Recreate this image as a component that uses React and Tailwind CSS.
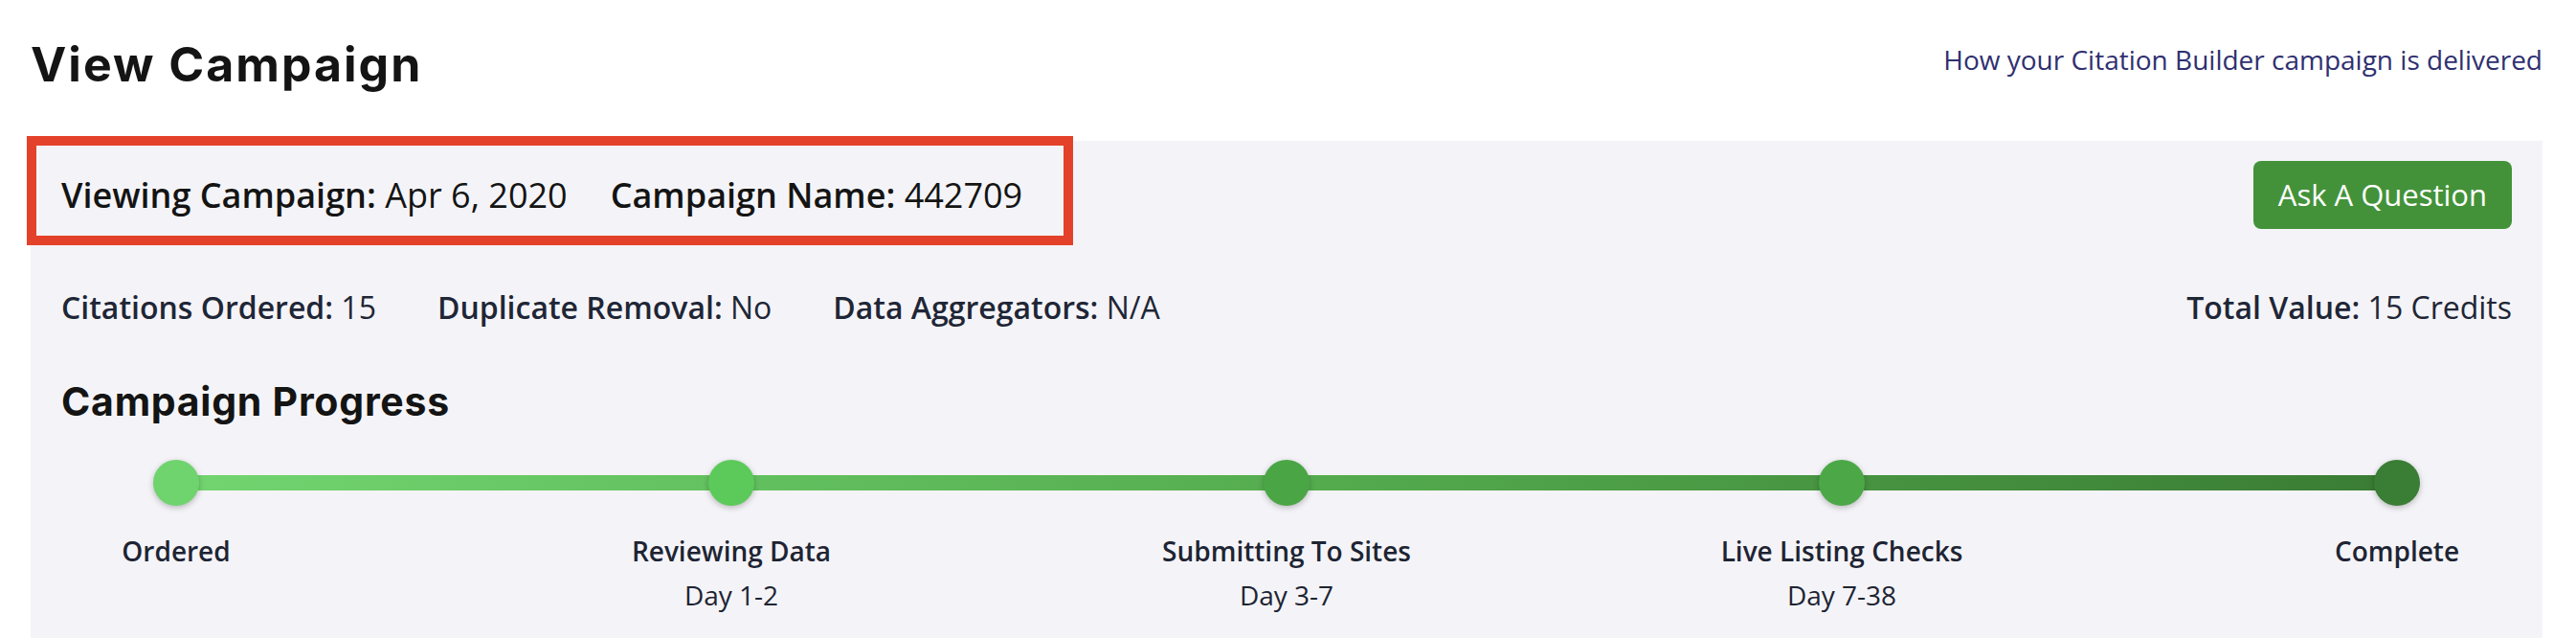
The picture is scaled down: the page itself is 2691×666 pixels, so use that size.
import React from 'react';

const steps = [
  { label: 'Ordered', day: '', dot: 'bg-[#6fd46e]' },
  { label: 'Reviewing Data', day: 'Day 1-2', dot: 'bg-[#5cca5a]' },
  { label: 'Submitting To Sites', day: 'Day 3-7', dot: 'bg-[#4aa645]' },
  { label: 'Live Listing Checks', day: 'Day 7-38', dot: 'bg-[#4ca847]' },
  { label: 'Complete', day: '', dot: 'bg-[#3a7d34]' },
];

const Field = ({ label, value }) => (
  <span>
    <span className="font-semibold">{label}:</span> {value}
  </span>
);

const App = () => {
  return (
    <div className="min-h-screen bg-white pl-8 pr-[35px] font-['Open_Sans',sans-serif]">
      {/* Header */}
      <div className="flex items-start justify-between pt-[43px]">
        <h1 className="font-['Inter',sans-serif] text-[50px] leading-[48px] font-bold tracking-[2px] text-[#141414]">
          View Campaign
        </h1>
        <a href="#" className="mt-[1px] text-[28px] leading-[36px] text-[#2f3070]">
          How your Citation Builder campaign is delivered
        </a>
      </div>

      {/* Campaign panel */}
      <div className="relative mt-[56px] bg-[#f4f4f8] px-8 pt-[21px] pb-16">
        <div className="absolute left-[-4px] top-[-5px] h-[114px] w-[1093px] border-[10px] border-[#e4412b] pointer-events-none" />

        <div className="flex h-[71px] items-center justify-between">
          <div className="flex gap-[45px] text-[36px] leading-[44px] text-[#141414]">
            <Field label="Viewing Campaign" value="Apr 6, 2020" />
            <Field label="Campaign Name" value="442709" />
          </div>
          <button className="h-[71px] rounded-lg bg-[#43923a] px-[26px] text-[31px] text-white">
            Ask A Question
          </button>
        </div>

        <div className="mt-[62px] flex justify-between text-[32px] leading-[40px] text-[#1f2636]">
          <div className="flex gap-[64px]">
            <Field label="Citations Ordered" value="15" />
            <Field label="Duplicate Removal" value="No" />
            <Field label="Data Aggregators" value="N/A" />
          </div>
          <Field label="Total Value" value="15 Credits" />
        </div>

        <h2 className="mt-[58px] font-['Inter',sans-serif] text-[41px] leading-[41px] font-bold tracking-[0.75px] text-[#141414]">
          Campaign Progress
        </h2>

        <div className="relative mt-[40px]">
          <div className="absolute left-[120px] right-[120px] top-[16px] h-4 bg-linear-to-r from-[#72d570] via-[#55ad4f] to-[#3a7c34]" />
          <div className="relative flex justify-between">
            {steps.map((step) => (
              <div key={step.label} className="flex w-[240px] flex-col items-center">
                <div className={`h-12 w-12 rounded-full shadow-[0_2px_6px_rgba(0,0,0,0.25)] ${step.dot}`} />
                <div className="mt-[24px] text-center text-[28px] leading-[46px] text-[#1e2433]">
                  <div className="font-semibold whitespace-nowrap">{step.label}</div>
                  {step.day && <div>{step.day}</div>}
                </div>
              </div>
            ))}
          </div>
        </div>
      </div>
    </div>
  );
};

export default App;
